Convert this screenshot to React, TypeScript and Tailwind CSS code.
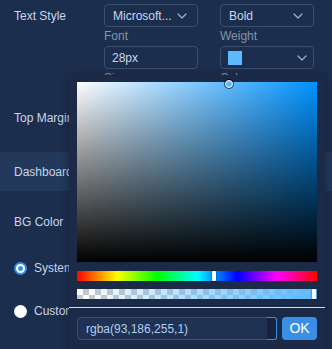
import React from "react";

const Chevron = ({ className = "" }: { className?: string }) => (
  <svg width="10" height="6" viewBox="0 0 10 6" className={className} fill="none">
    <path d="M1 1l4 4 4-4" stroke="currentColor" strokeWidth="1.2" strokeLinecap="round" strokeLinejoin="round" />
  </svg>
);

export default function App() {
  return (
    <div
      className="relative w-[332px] h-[349px] overflow-hidden bg-[#1c2e4e] text-[12px] text-[#c8d5ea]"
      style={{ fontFamily: '"Liberation Sans", Arial, sans-serif' }}
    >
      {/* Form */}
      <div className="pt-[4px]">
        <div className="flex px-[14px]">
          <div className="w-[90px] h-[23px] flex items-center">Text Style</div>
          <div className="grid grid-cols-[94px_94px] gap-x-[22px]">
            <div className="h-[23px] border border-[#3a4e6e] rounded-[4px] flex items-center justify-between pl-[8px] pr-[10px] text-[#c8d6ee]">
              <span>Microsoft...</span>
              <Chevron className="text-[#9fb0c8]" />
            </div>
            <div className="h-[23px] border border-[#3a4e6e] rounded-[4px] flex items-center justify-between pl-[8px] pr-[10px] text-[#c8d6ee]">
              <span>Bold</span>
              <Chevron className="text-[#9fb0c8]" />
            </div>
            <div className="h-[19px] leading-[19px] text-[#8593a8]">Font</div>
            <div className="h-[19px] leading-[19px] text-[#8593a8]">Weight</div>
            <div className="h-[23px] border border-[#3a4e6e] rounded-[4px] flex items-center pl-[7px] text-[#c8d6ee]">
              28px
            </div>
            <div className="h-[23px] border border-[#3a4e6e] rounded-[4px] flex items-center justify-between pl-[7px] pr-[6px]">
              <span className="w-[14px] h-[14px] bg-[#5dbaff]" />
              <Chevron className="text-[#9fb0c8]" />
            </div>
            <div className="h-[19px] leading-[19px] text-[#8593a8]">Size</div>
            <div className="h-[19px] leading-[19px] text-[#8593a8]">Color</div>
          </div>
        </div>
        <div className="h-[60px] flex items-center px-[14px]">Top Margin</div>
        <div className="mt-[4px] h-[39px] flex items-center px-[14px] bg-[#22395c]">Dashboard</div>
        <div className="h-[62px] flex items-center px-[14px]">BG Color</div>
        <div className="h-[30px] flex items-center px-[14px] gap-[7px]">
          <span className="w-[13px] h-[13px] rounded-full bg-[#3a8ee6] flex items-center justify-center">
            <span className="w-[9px] h-[9px] rounded-full bg-white flex items-center justify-center">
              <span className="w-[5px] h-[5px] rounded-full bg-[#3a8ee6]" />
            </span>
          </span>
          <span>System</span>
        </div>
        <div className="h-[56px] flex items-center px-[14px] gap-[7px]">
          <span className="w-[13px] h-[13px] rounded-full bg-white" />
          <span>Custom</span>
        </div>
      </div>

      {/* Color picker popover */}
      <div className="absolute left-[69px] top-[75px] w-[256px] h-[280px] bg-[#1b2a47] shadow-[0_2px_10px_rgba(0,0,0,0.35)] pt-[7px]">
        <div className="px-[8px]">
          <div className="relative w-[240px] h-[180px] bg-[#0092ff]">
            <div className="absolute inset-0 bg-[linear-gradient(to_right,#fff,rgba(255,255,255,0))]" />
            <div className="absolute inset-0 bg-[linear-gradient(to_top,#000,rgba(0,0,0,0))]" />
            <div className="absolute left-[148px] top-[-2px] w-[8px] h-[8px] rounded-full border-[1.5px] border-white shadow-[0_0_0_1px_rgba(0,0,0,0.6)] bg-[#5dbaff]" />
          </div>
          <div className="relative mt-[9px] w-[240px] h-[10px] bg-[linear-gradient(to_right,#f00_0%,#ff0_16.66%,#0f0_33.33%,#0ff_50%,#00f_66.66%,#f0f_83.33%,#f00_100%)]">
            <div className="absolute left-[135px] top-0 w-[4px] h-[10px] bg-white rounded-[1px] shadow-[0_0_2px_rgba(0,0,0,0.6)]" />
          </div>
          <div className="relative mt-[8px] w-[240px] h-[10px] bg-[conic-gradient(#c8c8c8_25%,#ffffff_0_50%,#c8c8c8_0_75%,#ffffff_0)] bg-[length:12px_12px]">
            <div className="absolute inset-0 bg-[linear-gradient(to_right,rgba(93,186,255,0),rgba(93,186,255,1))]" />
            <div className="absolute right-[1px] top-0 w-[4px] h-[10px] bg-white rounded-[1px] shadow-[0_0_2px_rgba(0,0,0,0.6)]" />
          </div>
        </div>
        <div className="mt-[8px] h-[1px] bg-[#d5dde8]" />
        <div className="flex items-center px-[8px] mt-[9px] gap-[5px]">
          <div className="relative w-[200px] h-[23px]">
            <div className="absolute inset-y-0 left-0 w-[193px] border border-[#3b5072] rounded-l-[4px] bg-[#1f3253] flex items-center pl-[8px] text-[#b3cdf0]">
              rgba(93,186,255,1)
            </div>
            <div className="absolute inset-y-0 right-0 w-[10px] border border-l-0 border-[#3a8ee6] rounded-r-[3px] bg-[#16233c]" />
          </div>
          <div className="w-[35px] h-[23px] rounded-[4px] bg-[#3a8ee6] text-white text-[14px] flex items-center justify-center">
            OK
          </div>
        </div>
      </div>
    </div>
  );
}
